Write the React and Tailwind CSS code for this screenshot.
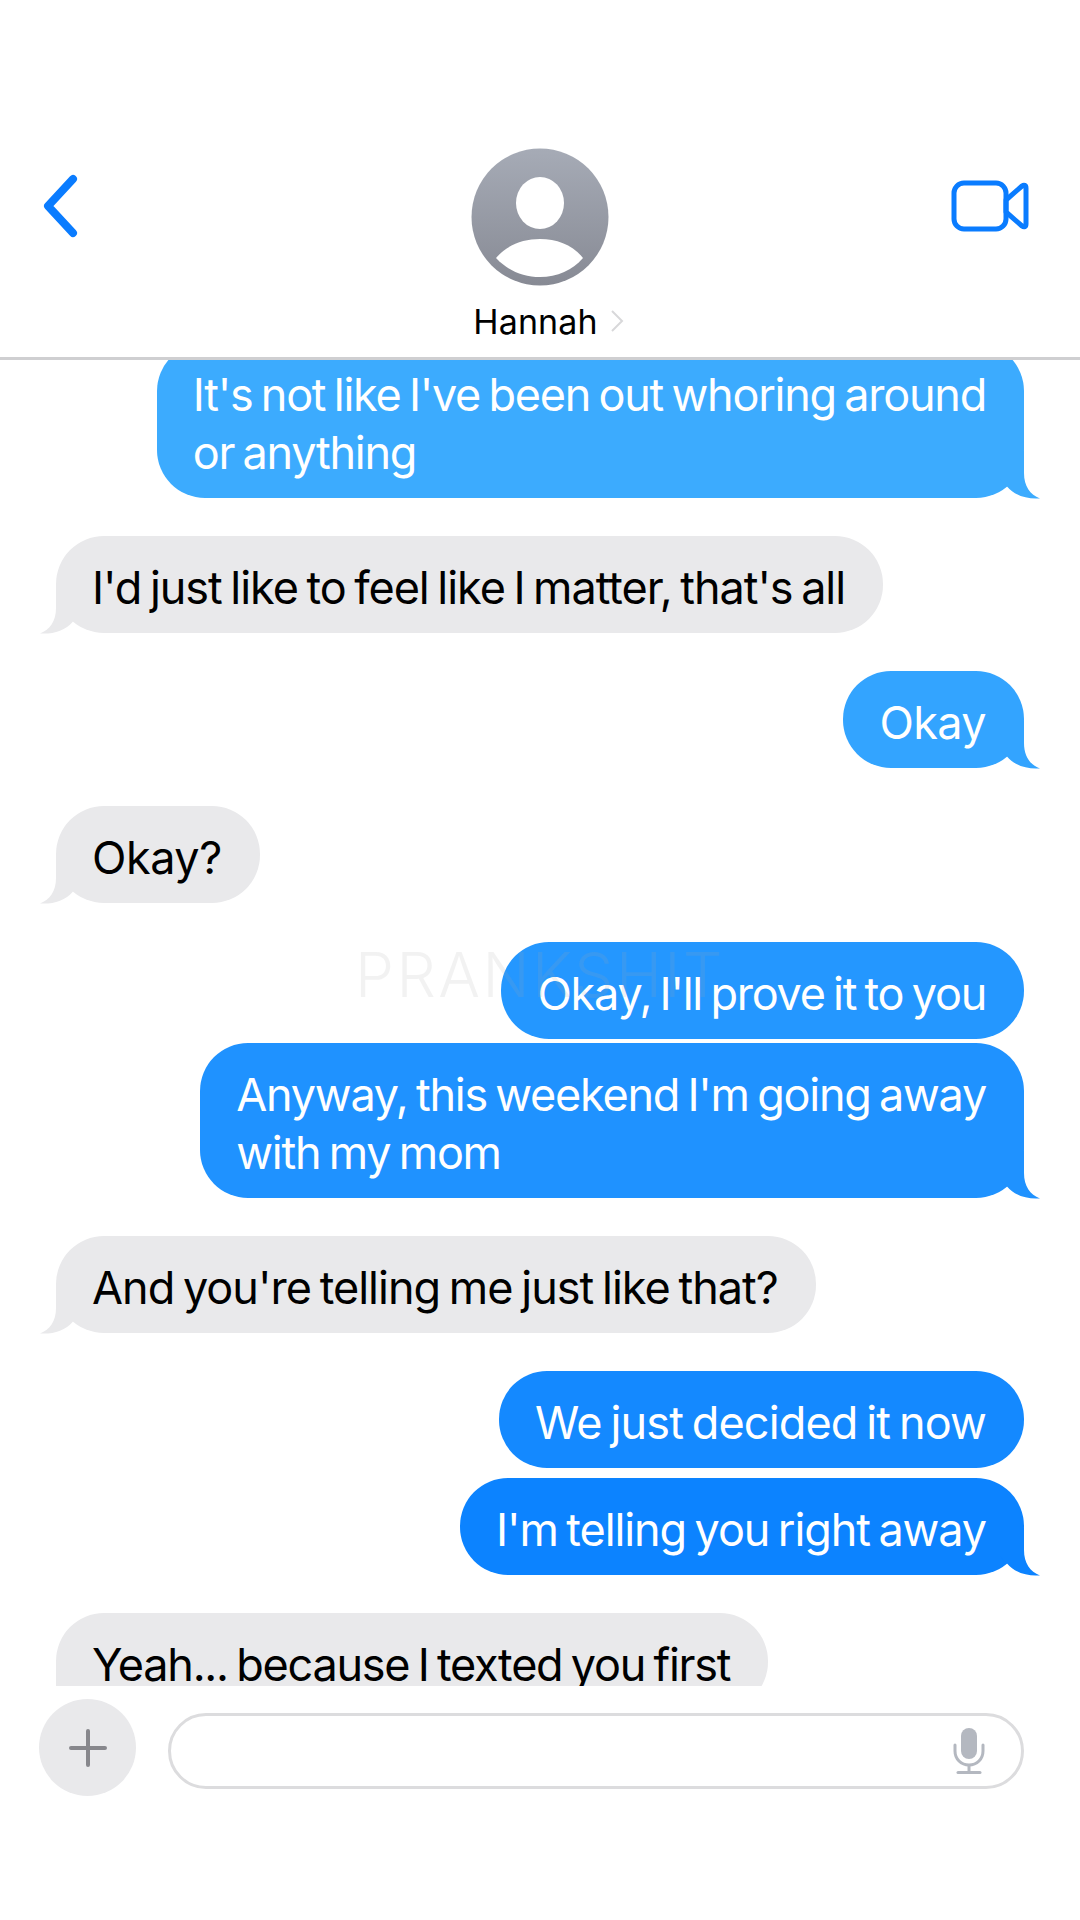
const FONT = "font-['Inter','Noto_Sans',sans-serif]";

// bubble tail, drawn for the right side and mirrored for incoming messages
function Tail({ side, fill }) {
    const place = side === 'right' ? 'right-[-16px] bottom-[-1px]' : 'left-[-16px] bottom-[-1px] -scale-x-100';
    return (
        <svg viewBox="0 0 40 48" className={`absolute w-[40px] h-[48px] ${place} ${fill}`}>
            <path d="M0 0H24V22C24 35 30 44 40 47.400C28 48.500 15 45 7 35.500L0 28Z" />
        </svg>
    );
}

function Sent({ children, bg, fill, tail = true, className = '', track = '' }) {
    return (
        <div className={`flex justify-end pr-[56px] ${className}`}>
            <div className={`relative rounded-[48px] pl-[36px] pr-[38px] pt-[23px] pb-[16px] text-white ${bg} ${track}`}>
                {children}
                {tail && <Tail side="right" fill={fill} />}
            </div>
        </div>
    );
}

function Received({ children, className = '', track = '' }) {
    return (
        <div className={`flex justify-start pl-[56px] ${className}`}>
            <div className={`relative rounded-[48px] pl-[36px] pr-[38px] pt-[23px] pb-[16px] text-black bg-[#e9e9eb] ${track}`}>
                {children}
                <Tail side="left" fill="fill-[#e9e9eb]" />
            </div>
        </div>
    );
}

export default function App() {
    return (
        <div className={`w-[1080px] h-[1920px] bg-white flex flex-col overflow-hidden ${FONT}`}>
            {/* header */}
            <div className="relative h-[360px] shrink-0 border-b-[3px] border-[#cfcfd1] bg-white z-10">
                <svg viewBox="0 0 36 64" className="absolute left-[41px] top-[174px] w-[38px] h-[64px] fill-none stroke-[#0a7cff]">
                    <path d="M31 5L6 32L31 59" strokeWidth="8" strokeLinecap="round" strokeLinejoin="round" />
                </svg>
                <svg viewBox="0 0 78 52" className="absolute left-[951px] top-[180px] w-[78px] h-[52px] fill-none stroke-[#0a7cff]">
                    <rect x="3" y="3" width="52" height="46" rx="10" strokeWidth="5" />
                    <path d="M55 20L71 6C73 4.500 75 5 75 8V44C75 47 73 47.500 71 46L55 32Z" strokeWidth="5" strokeLinejoin="round" />
                </svg>
                <div className="flex flex-col items-center pt-[148px]">
                    <svg viewBox="0 0 138 138" className="w-[138px] h-[138px]">
                        <defs>
                            <linearGradient id="avatar" x1="0" y1="0" x2="0" y2="1">
                                <stop offset="0" stopColor="#a6abb6" />
                                <stop offset="1" stopColor="#878a94" />
                            </linearGradient>
                        </defs>
                        <circle cx="69" cy="69" r="68.500" fill="url(#avatar)" />
                        <ellipse cx="69" cy="55" rx="24" ry="26" fill="#fff" />
                        <path d="M25 110C36 97 52 91 69 91C86 91 102 97 112 110C102 122 86 129 69 129C52 129 36 122 25 110Z" fill="#fff" />
                    </svg>
                    <div className="relative mt-[16px] mr-[9px] text-[34px] leading-[40px] tracking-[0.1px] text-black">
                        Hannah
                        <svg viewBox="0 0 14 24" className="absolute right-[-26px] top-[7px] w-[14px] h-[24px] fill-none stroke-[#d8d8da] stroke-2">
                            <path d="M2 2L12 12L2 22" />
                        </svg>
                    </div>
                </div>
            </div>

            {/* messages */}
            <div className="relative h-[1326px] shrink-0 overflow-hidden text-[45px] leading-[58px] tracking-[-1.25px] [word-spacing:-3px]">
                <div className="relative flex flex-col mt-[-17px]">
                    <Sent bg="bg-[#3cabfe]" fill="fill-[#3cabfe]">
                        It's not like I've been out whoring around
                        <br />
                        or anything
                    </Sent>
                    <Received className="mt-[38px]" track="tracking-[-1.05px]">I'd just like to feel like I matter, that's all</Received>
                    <Sent bg="bg-[#33a4ff]" fill="fill-[#33a4ff]" className="mt-[38px]" track="tracking-[-0.6px]">Okay</Sent>
                    <Received className="mt-[38px]" track="tracking-[-0.45px]">Okay?</Received>
                    <Sent bg="bg-[#2497ff]" tail={false} className="mt-[39px]">Okay, I'll prove it to you</Sent>
                    <Sent bg="bg-[#1f92ff]" fill="fill-[#1f92ff]" className="mt-[4px]">
                        Anyway, this weekend I'm going away
                        <br />
                        with my mom
                    </Sent>
                    <Received className="mt-[38px]" track="tracking-[-0.98px]">And you're telling me just like that?</Received>
                    <Sent bg="bg-[#1489ff]" tail={false} className="mt-[38px]" track="tracking-[-0.86px]">We just decided it now</Sent>
                    <Sent bg="bg-[#0c83ff]" fill="fill-[#0c83ff]" className="mt-[10px]" track="tracking-[-1.1px]">I'm telling you right away</Sent>
                    <Received className="mt-[38px]">Yeah... because I texted you first</Received>
                </div>
                {/* watermark sits over the bubbles */}
                <div className="absolute left-[355px] top-[580px] text-[62px] leading-[70px] font-light tracking-[2.5px] [word-spacing:0] text-[#aaaaaa26] pointer-events-none">PRANKSHIT</div>
            </div>

            {/* composer */}
            <div className="flex items-start gap-[32px] pl-[39px] pr-[56px] pt-[13px]">
                <div className="w-[97px] h-[97px] rounded-full bg-[#e9e9eb] flex items-center justify-center shrink-0">
                    <svg viewBox="0 0 38 38" className="w-[38px] h-[38px] stroke-[#87878c]">
                        <path d="M19 2V36M2 19H36" strokeWidth="4" strokeLinecap="round" />
                    </svg>
                </div>
                <div className="flex-1 mt-[14px] h-[76px] rounded-full border-[3px] border-[#dcdcde] flex items-center justify-end pr-[36px]">
                    <svg viewBox="0 0 32 46" className="w-[32px] h-[46px] fill-none stroke-[#b4b8c0]">
                        <rect x="8" y="0" width="16" height="31" rx="8" fill="#b4b8c0" stroke="none" />
                        <path d="M2 17V23C2 31 8 37 16 37C24 37 30 31 30 23V17" strokeWidth="3" strokeLinecap="round" />
                        <path d="M16 37V44" strokeWidth="3" />
                        <path d="M5 44.500H27" strokeWidth="3" strokeLinecap="round" />
                    </svg>
                </div>
            </div>
        </div>
    );
}
